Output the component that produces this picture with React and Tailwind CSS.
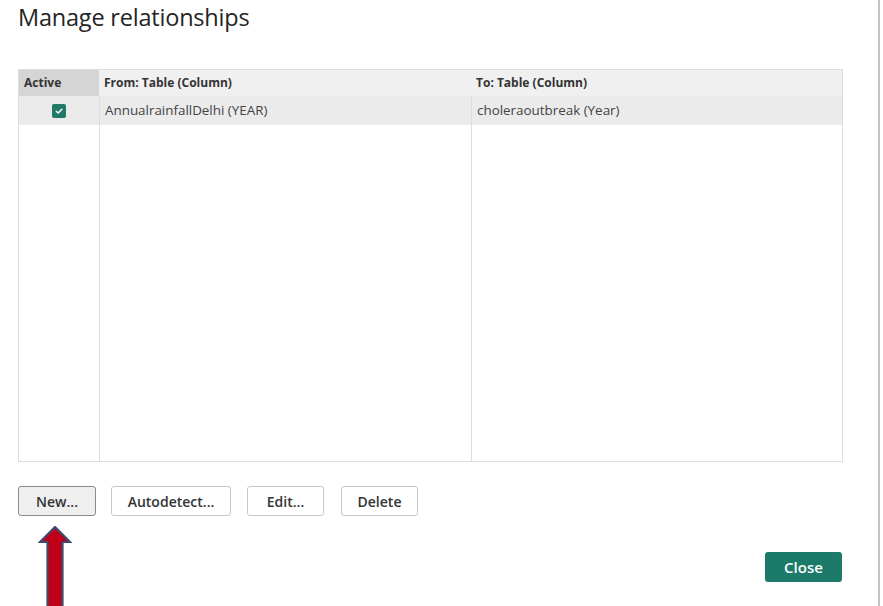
import React from "react";

const font = { fontFamily: '"Open Sans", "Noto Sans", "Liberation Sans", sans-serif' };

function Btn({ children, w, primary }) {
  return (
    <div
      className={`h-[30px] flex items-center justify-center rounded-[3px] border text-[14px] font-semibold text-[#333] ${w} ${
        primary ? "bg-[#efefef] border-[#8a8a8a]" : "bg-white border-[#c8c8c8]"
      }`}
    >
      {children}
    </div>
  );
}

export default function App() {
  return (
    <div className="w-[883px] h-[606px] bg-white overflow-hidden" style={font}>
      <div className="w-[880px] h-[606px] border-r-2 border-[#c4c4c4] flex flex-col">
        <div className="shrink-0 pl-[18px] pt-[2px] h-[69px] text-[23.5px] leading-[30px] text-[#252525] tracking-[-0.2px]">
          Manage relationships
        </div>
        <div className="shrink-0 ml-[18px] w-[825px] h-[393px] border border-[#dedede] grid grid-cols-[80px_372px_1fr] grid-rows-[26px_29px_1fr]">
          <div className="bg-[#d5d5d5] text-[12px] font-bold text-[#333] pl-[5px] flex items-center">Active</div>
          <div className="bg-[#f0f0f0] text-[12px] font-bold text-[#333] pl-[5px] flex items-center">From: Table (Column)</div>
          <div className="bg-[#f0f0f0] text-[12px] font-bold text-[#333] pl-[5px] flex items-center">To: Table (Column)</div>
          <div className="bg-[#ebebeb] flex items-center justify-center">
            <div className="w-[14px] h-[14px] bg-[#217a68] rounded-[2px] flex items-center justify-center">
              <svg width="10" height="10" viewBox="0 0 10 10">
                <path d="M2.3 5.2 L4.2 7 L7.8 3.2" stroke="white" strokeWidth="1.5" fill="none" strokeLinecap="round" strokeLinejoin="round" />
              </svg>
            </div>
          </div>
          <div className="bg-[#ebebeb] text-[13.4px] text-[#444] pl-[5px] flex items-center border-l border-[#dedede]">AnnualrainfallDelhi (YEAR)</div>
          <div className="bg-[#ebebeb] text-[13.4px] text-[#444] pl-[5px] flex items-center border-l border-[#dedede]">choleraoutbreak (Year)</div>
          <div></div>
          <div className="border-l border-[#dedede]"></div>
          <div className="border-l border-[#dedede]"></div>
        </div>
        <div className="shrink-0 ml-[18px] mt-[24px] flex">
          <Btn w="w-[78px]" primary>New...</Btn>
          <div className="ml-[15px]"><Btn w="w-[120px]">Autodetect...</Btn></div>
          <div className="ml-[16px]"><Btn w="w-[77px]">Edit...</Btn></div>
          <div className="ml-[17px]"><Btn w="w-[77px]">Delete</Btn></div>
        </div>
        <div className="flex flex-1 mt-[9px]">
          <svg className="shrink-0 ml-[38px] mt-[1px]" width="34" height="90" viewBox="0 0 34 90">
            <path d="M17 1 L32 16 L24.5 16 L24.5 90 L9.5 90 L9.5 16 L2 16 Z" fill="#c00016" stroke="#3d4a6e" strokeWidth="2.2" strokeLinejoin="miter" />
          </svg>
          <div className="shrink-0 ml-auto mr-[36px] mt-[27px] w-[77px] h-[30px] bg-[#1b7a68] rounded-[3px] flex items-center justify-center text-white text-[15px] font-semibold">
            Close
          </div>
        </div>
      </div>
    </div>
  );
}
